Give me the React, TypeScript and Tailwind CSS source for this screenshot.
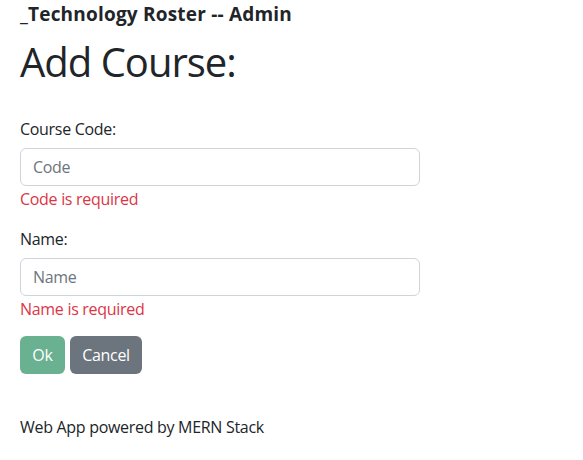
import React from "react";

export default function App() {
  return (
    <div
      className="min-h-[460px] bg-white px-5 text-[#212529]"
      style={{ fontFamily: '"Open Sans", "Noto Sans", sans-serif' }}
    >
      <div className="pt-[2px] text-[19px] font-bold leading-[24px] tracking-[0.2px]">_Technology Roster -- Admin</div>
      <h1 className="mt-[12px] text-[40px] leading-[48px] font-normal tracking-[-1px]">Add Course:</h1>
      <form className="mt-[31px] w-[400px] tracking-[-0.3px]">
        <label className="block text-[16px] leading-[24px]">Course Code:</label>
        <input
          placeholder="Code"
          className="mt-[7px] block h-[38px] w-full rounded-[6px] border border-[#ced4da] px-3 text-[16px] tracking-[-0.3px] placeholder:text-[#6c757d]"
        />
        <div className="mt-[1px] text-[16px] leading-[24px] text-[#dc3545]">Code is required</div>
        <label className="mt-[16px] block text-[16px] leading-[24px]">Name:</label>
        <input
          placeholder="Name"
          className="mt-[7px] block h-[38px] w-full rounded-[6px] border border-[#ced4da] px-3 text-[16px] tracking-[-0.3px] placeholder:text-[#6c757d]"
        />
        <div className="mt-[1px] text-[16px] leading-[24px] text-[#dc3545]">Name is required</div>
        <div className="mt-[15px] flex gap-[5px]">
          <button type="button" className="h-[38px] w-[45px] rounded-[6px] bg-[#69b190] text-[16px] text-white">
            Ok
          </button>
          <button type="button" className="h-[38px] w-[72px] rounded-[6px] bg-[#6c757d] text-[16px] text-white">
            Cancel
          </button>
        </div>
      </form>
      <div className="mt-[41px] text-[16px] leading-[24px] tracking-[-0.3px]">Web App powered by MERN Stack</div>
    </div>
  );
}
